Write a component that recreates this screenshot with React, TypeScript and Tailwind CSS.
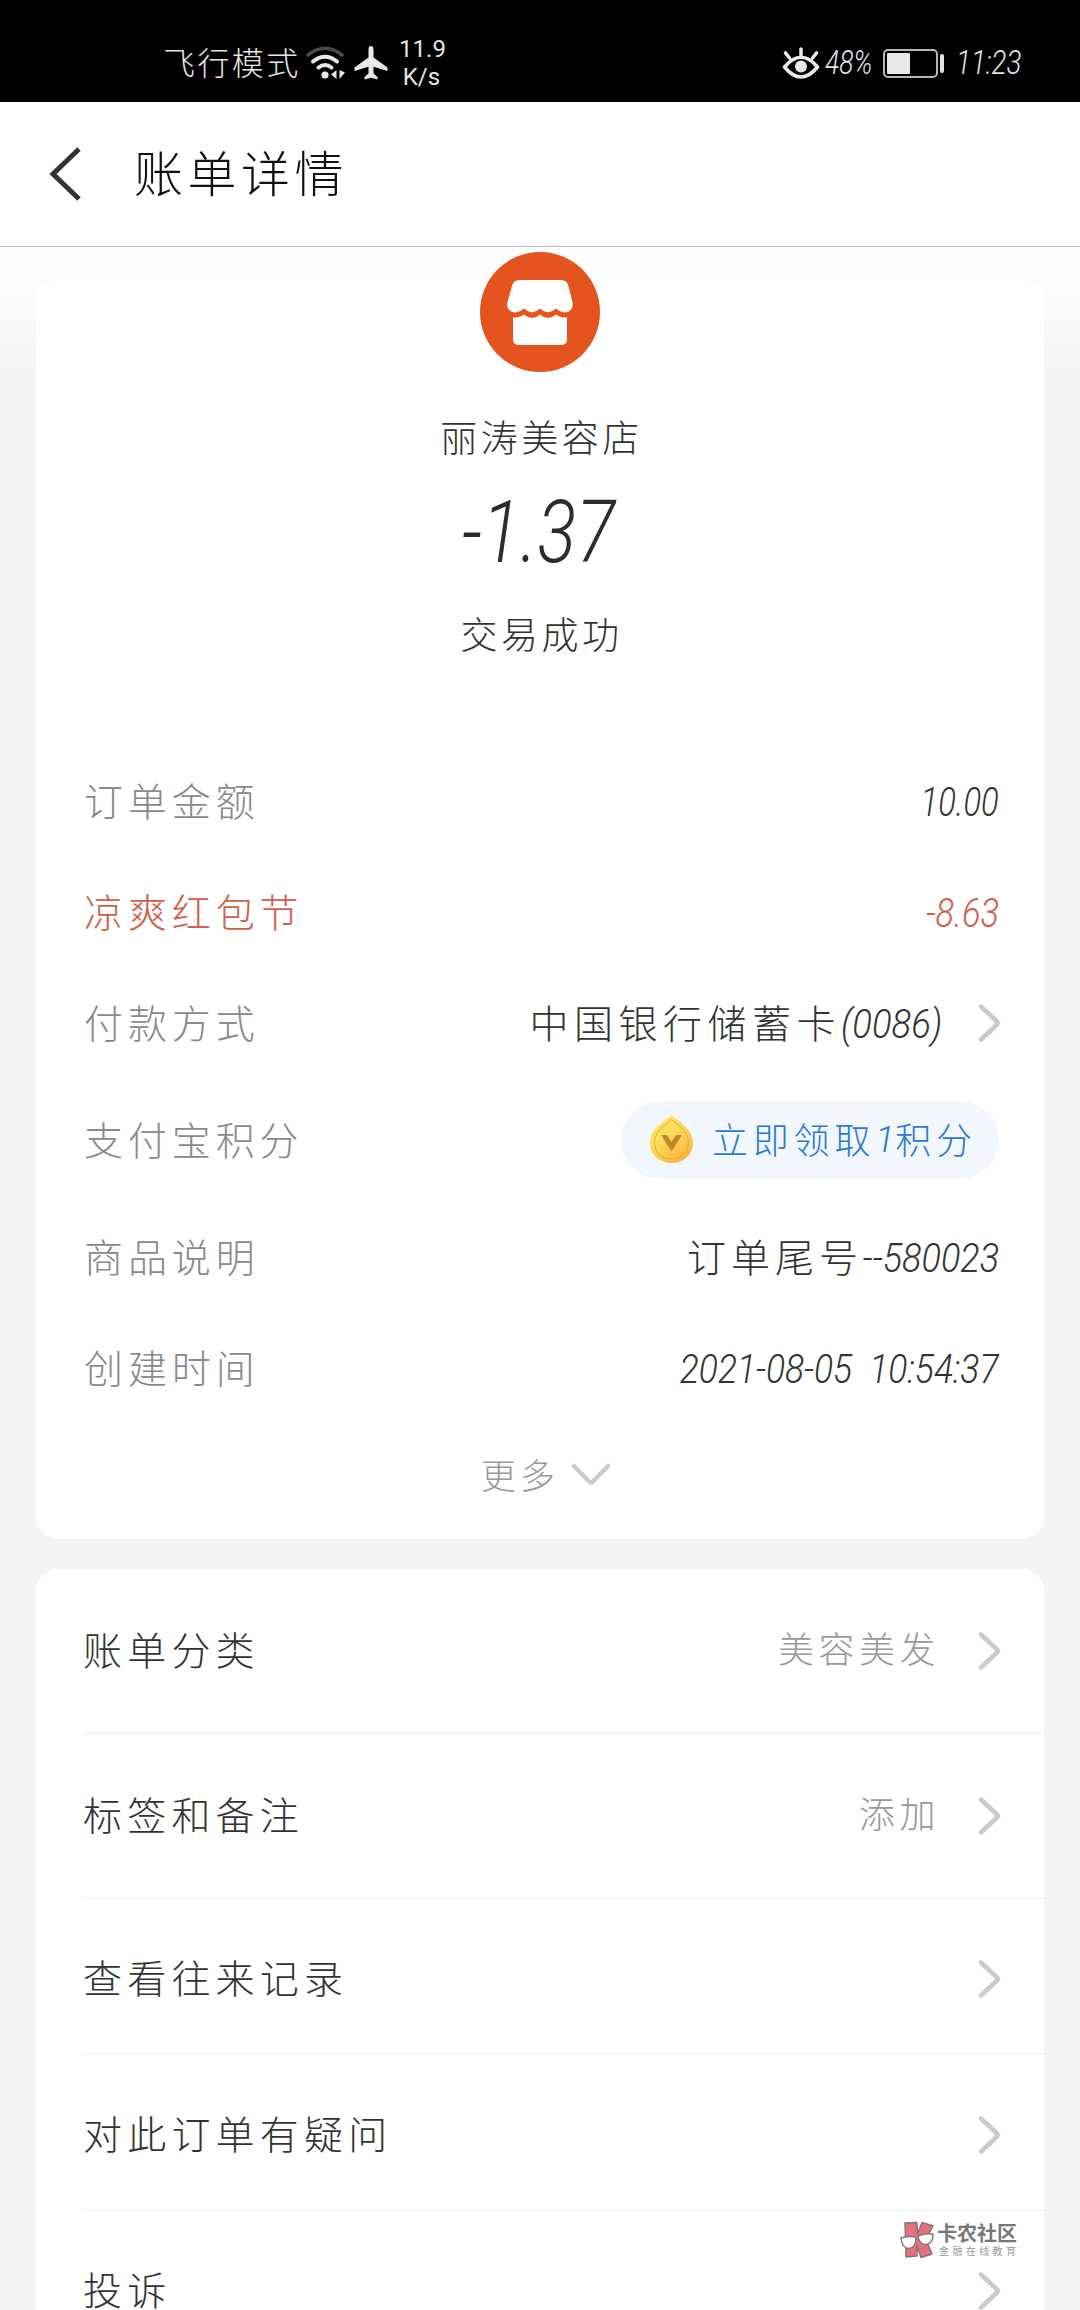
import type { ReactNode } from 'react'

const CJK = "font-['Noto_Sans_CJK_SC',sans-serif] font-light whitespace-nowrap"
const NUM = "font-[Roboto,'Noto_Sans',sans-serif] font-light italic whitespace-nowrap inline-block"

function Chevron() {
  return (
    <svg className="ml-auto h-[42px] w-[24px] shrink-0" viewBox="0 0 24 42" fill="none" stroke="#cbcbcb" strokeWidth="4.6" strokeLinecap="round" strokeLinejoin="round">
      <path d="M4 4.5 L20 19.5 Q21.6 21 20 22.5 L4 37.5" />
    </svg>
  )
}

function StatusBar() {
  return (
    <header className="flex h-[102px] shrink-0 items-center bg-black pt-[24px] text-[#e4e4e4]">
      <span className={`${CJK} -mt-[4px] ml-[163px] w-[141px] text-[32px] leading-[40px] tracking-[2.4px]`}>飞行模式</span>
      <svg className="h-[34px] w-[42px]" viewBox="0 0 42 34" fill="none" strokeLinecap="round">
        <path d="M4 9 Q21 -4.500 38 9" stroke="#4a4a4a" strokeWidth="3.600" />
        <path d="M9 15.500 Q21 6 33 15.500" stroke="#e8e8e8" strokeWidth="4" />
        <path d="M14.500 21.500 Q21 16.500 27.500 21.500" stroke="#e8e8e8" strokeWidth="4" />
        <circle cx="21" cy="29" r="3.600" fill="#e8e8e8" />
        <path d="M32.500 24 V33 L27 28.500 Z M35.500 24 V33 L41 26.500 Z" fill="#e8e8e8" />
      </svg>
      <svg className="ml-[7px] h-[36px] w-[36px]" viewBox="0 0 36 36" fill="#e8e8e8">
        <path d="M18 1 C16.200 1 15.500 2.800 15.500 4.500 V12.500 L1.500 22.500 V26 L15.500 21.800 V28.500 L11.500 32 V34.500 L18 32.800 L24.500 34.500 V32 L20.500 28.500 V21.800 L34.500 26 V22.500 L20.500 12.500 V4.500 C20.500 2.800 19.800 1 18 1 Z" />
      </svg>
      <div className="ml-[6px] flex w-[55px] flex-col items-center font-[Roboto,sans-serif] text-[24px] leading-[28px]">
        <span>11.9</span>
        <span className="-ml-[2px]">K/s</span>
      </div>
      <svg className="ml-[332px] h-[34px] w-[38px]" viewBox="0 0 38 34" fill="none" stroke="#e8e8e8" strokeWidth="3.600" strokeLinecap="round">
        <path d="M2.500 21 Q19 1.500 35.500 21 Q19 41 2.500 21 Z" strokeLinejoin="round" />
        <circle cx="19" cy="20.500" r="6" fill="#e8e8e8" stroke="none" />
        <path d="M19 3 V9 M3.500 7 L7.500 12 M34.500 7 L30.500 12" />
      </svg>
      <span className="ml-[5px] w-[58px]">
        <span className={`${NUM} origin-left scale-x-[0.8] text-[33px] leading-[40px]`}>48%</span>
      </span>
      <span className="flex h-[29px] w-[55px] items-center rounded-[5px] border-2 border-[#b5b5b5] pl-[2px]">
        <span className="h-[21px] w-[23px] rounded-[1px] bg-[#e8e8e8]" />
      </span>
      <span className="ml-[2px] h-[19px] w-[4px] rounded-[2px] bg-[#e4e4e4]" />
      <span className="ml-[12px] w-[66px]">
        <span className={`${NUM} origin-left scale-x-[0.84] text-[33px] leading-[40px]`}>11:23</span>
      </span>
    </header>
  )
}

function TitleBar() {
  return (
    <div className="flex h-[145px] shrink-0 items-center border-b border-[#c2c2c2] bg-white">
      <svg className="-mt-[1px] ml-[48px] h-[54px] w-[34px]" viewBox="0 0 34 54" fill="none" stroke="#333" strokeWidth="5">
        <path d="M31 2 L5 27 L31 52" />
      </svg>
      <h1 className={`${CJK} -mt-[7px] ml-[52px] text-[49px] leading-[60px] tracking-[4.5px] text-[#111]`}>账单详情</h1>
    </div>
  )
}

function ShopLogo() {
  return (
    <svg className="-mt-[27px] h-[120px] w-[120px] shrink-0" viewBox="0 0 120 120">
      <circle cx="60" cy="60" r="60" fill="#e5531f" />
      <path d="M39 28 H81 Q87 28 88.500 34 L92.500 50 Q94 60 84 60.500 Q80 60 76 56.500 Q72 60 68 60.500 Q64 60 60 56.500 Q56 60 52 60.500 Q48 60 44 56.500 Q40 60 36 60.500 Q26 60 27.500 50 L32 34 Q33.500 28 39 28 Z" fill="#fff" />
      <path d="M33 65.500 Q40 66 44 62.500 Q48 66 52 66 Q56 66 60 62.500 Q64 66 68 66 Q72 66 76 62.500 Q80 66 87 65.500 V87 Q87 93 81 93 H39 Q33 93 33 87 Z" fill="#fff" />
    </svg>
  )
}

function Coin() {
  return (
    <svg className="-mt-[2px] ml-[28px] h-[50px] w-[45px] shrink-0" viewBox="0 0 45 50">
      <defs>
        <linearGradient id="coin" x1="0" y1="0" x2="0.600" y2="1">
          <stop offset="0" stopColor="#ffee66" />
          <stop offset="0.500" stopColor="#fbdc5c" />
          <stop offset="1" stopColor="#f9b544" />
        </linearGradient>
      </defs>
      <path d="M22.500 1 C27 6 44 14 44 28.500 C44 41 34 49 22.500 49 C11 49 1 41 1 28.500 C1 14 18 6 22.500 1 Z" fill="url(#coin)" />
      <path d="M22.500 5.500 C27 10 39.500 16 39.500 28.500 C39.500 39 31.500 45 22.500 45 C13.500 45 5.500 39 5.500 28.500 C5.500 16 18 10 22.500 5.500 Z" fill="none" stroke="#e5a83a" strokeWidth="1" />
      <path d="M12 21 H18 L22.500 28 L27 21 H33 L22.500 37.500 Z" fill="#c08a2c" />
    </svg>
  )
}

function DetailRow({ label, tone = 'text-[#8a8a8a]', height = 'h-[111px]', children }: { label: string; tone?: string; height?: string; children: ReactNode }) {
  return (
    <div className={`flex shrink-0 items-center justify-between pr-[45px] pl-[48px] ${height} ${tone}`}>
      <span className={`${CJK} -mt-[3px] text-[39px] leading-[50px] tracking-[4.900px]`}>{label}</span>
      {children}
    </div>
  )
}

function MenuRow({ label, value, height, last }: { label: string; value?: string; height: string; last?: boolean }) {
  return (
    <div className={`ml-[47px] flex shrink-0 items-center pr-[43px] ${height} ${last ? '' : 'border-b-2 border-[#f5f5f5]'}`}>
      <span className={`${CJK} -mt-[6px] text-[39px] leading-[50px] tracking-[5.200px] text-[#333]`}>{label}</span>
      <span className={`${CJK} -mt-[7px] mr-[37px] ml-auto text-[36px] leading-[50px] tracking-[4.500px] text-[#999]`}>{value}</span>
      <div className="shrink-0">
        <Chevron />
      </div>
    </div>
  )
}

function Watermark() {
  return (
    <div className="absolute top-[2221px] left-[899px] flex">
      <svg className="h-[38px] w-[36px]" viewBox="0 0 36 38" stroke="#807478" strokeWidth="1.400" strokeLinejoin="round">
        <path d="M6 2 L18 1.500 L18.500 13 L23 1.500 L34 5 L27 18 L33 33 L22 36.500 L18 25 V35 L7 36 Z" fill="#e8707c" />
        <path d="M2 17 Q9 14.500 17 16 Q17 27 10 27.500 Q3 27.500 2 17 Z" fill="#fff" />
        <path d="M19 15 Q26 12 34 13 Q34 23 27 23.500 Q20 23.500 19 15 Z" fill="#fff" />
      </svg>
      <div className="ml-[2px] flex flex-col font-['Noto_Sans_CJK_SC',sans-serif] whitespace-nowrap">
        <span className="mt-[1px] text-[20px] leading-[22px] font-bold text-[#777]">卡农社区</span>
        <span className="ml-[2px] text-[10px] leading-[14px] tracking-[3.400px] text-[#999]">金融在线教育</span>
      </div>
    </div>
  )
}

export default function App() {
  return (
    <div className="relative flex h-[2310px] w-[1080px] flex-col overflow-hidden bg-[#f4f4f4]">
      <StatusBar />
      <TitleBar />
      <main className="flex flex-1 flex-col gap-[30px] bg-linear-to-b from-white to-[#f4f4f4] to-[130px] px-[36px] pt-[32px]">
        <section className="flex h-[1260px] shrink-0 flex-col rounded-[22px] bg-white">
          <div className="flex h-[466px] shrink-0 flex-col items-center">
            <ShopLogo />
            <span className={`${CJK} mt-[39px] ml-[3px] text-[37px] leading-[50px] tracking-[3.500px] text-[#333]`}>丽涛美容店</span>
            <span className={`${NUM} mt-[21px] -ml-[3px] scale-x-[0.830] text-[87px] leading-[100px] text-[#2c2c2c]`}>-1.37</span>
            <span className={`${CJK} mt-[26px] ml-[3px] text-[37px] leading-[50px] tracking-[3.500px] text-[#333]`}>交易成功</span>
          </div>
          <DetailRow label="订单金额">
            <span className={`${NUM} mt-[2px] origin-right scale-x-[0.800] text-[41px] leading-[50px] text-[#333]`}>10.00</span>
          </DetailRow>
          <DetailRow label="凉爽红包节" tone="text-[#d0604c]">
            <span className={`${NUM} mt-[2px] origin-right scale-x-[0.840] text-[41px] leading-[50px]`}>-8.63</span>
          </DetailRow>
          <DetailRow label="付款方式">
            <div className="-mr-[2px] flex items-center text-[#333]">
              <span className={`${CJK} -mt-[3px] text-[39px] leading-[50px] tracking-[5.500px]`}>中国银行储蓄卡</span>
              <span className="mt-[2px] w-[136px]">
                <span className={`${NUM} origin-left scale-x-[0.890] text-[41px] leading-[50px]`}>(0086)</span>
              </span>
              <Chevron />
            </div>
          </DetailRow>
          <DetailRow label="支付宝积分" height="h-[123px]">
            <div className="flex h-[78px] w-[378px] items-center rounded-full bg-[#f2f7fd] text-[#2b7ad0]">
              <Coin />
              <span className={`${CJK} -mt-[4px] ml-[18px] text-[36px] leading-[50px] tracking-[4.800px]`}>立即领取</span>
              <span className={`${NUM} w-[16px] text-[36px] leading-[50px]`}>1</span>
              <span className={`${CJK} -mt-[4px] ml-[4px] text-[36px] leading-[50px] tracking-[4.800px]`}>积分</span>
            </div>
          </DetailRow>
          <DetailRow label="商品说明">
            <div className="flex items-center text-[#333]">
              <span className={`${CJK} -mt-[3px] text-[39px] leading-[50px] tracking-[5px]`}>订单尾号</span>
              <span className="mt-[2px] flex w-[136px] justify-end">
                <span className={`${NUM} origin-right scale-x-[0.880] text-[41px] leading-[50px]`}>--580023</span>
              </span>
            </div>
          </DetailRow>
          <DetailRow label="创建时间">
            <span className={`${NUM} mt-[2px] origin-right scale-x-[0.865] text-[41px] leading-[50px] text-[#333]`}>2021-08-05&nbsp; 10:54:37</span>
          </DetailRow>
          <div className="flex h-[102px] shrink-0 items-center pl-[445px] text-[#999]">
            <span className={`${CJK} text-[35px] leading-[50px] tracking-[4px]`}>更多</span>
            <svg className="ml-[11px] h-[24px] w-[42px]" viewBox="0 0 42 24" fill="none" stroke="#cbcbcb" strokeWidth="4.400" strokeLinecap="round" strokeLinejoin="round">
              <path d="M4 4 L19 19.500 Q21 21.300 23 19.500 L38 4" />
            </svg>
          </div>
        </section>
        <section className="flex h-[900px] shrink-0 flex-col rounded-[22px] bg-white">
          <MenuRow label="账单分类" value="美容美发" height="h-[165px]" />
          <MenuRow label="标签和备注" value="添加" height="h-[165px]" />
          <MenuRow label="查看往来记录" height="h-[156px] pt-[5px]" />
          <MenuRow label="对此订单有疑问" height="h-[156px] pt-[5px]" />
          <MenuRow label="投诉" height="h-[156px] pt-[3px]" last />
        </section>
      </main>
      <Watermark />
    </div>
  )
}
